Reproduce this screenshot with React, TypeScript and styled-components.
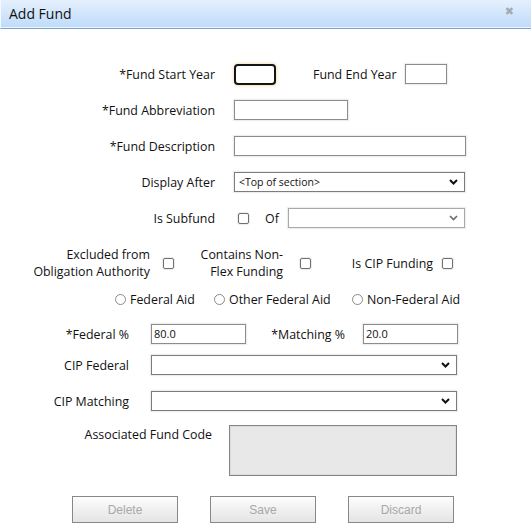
import React from "react";
import styled, { createGlobalStyle } from "styled-components";

const Global = createGlobalStyle`
  html, body { margin: 0; padding: 0; background: #fff; }
  body { font-family: "Open Sans", "Noto Sans", sans-serif; font-size: 12.4px; color: #111; }
  * { box-sizing: border-box; }
`;

const Dialog = styled.div`
  width: 531px;
  height: 530px;
  background: #fff;
  display: flex;
  flex-direction: column;
`;

const TitleBar = styled.div`
  height: 29px;
  flex: none;
  display: flex;
  align-items: center;
  justify-content: space-between;
  padding: 0 17px 2px 8px;
  background: linear-gradient(#e5f0fd, #bedbfa);
  border-left: 1px solid #f4f9ff;
  box-shadow: inset 0 -1px 0 #eef5fd;
  border-bottom: 1px solid #7ba3cb;
`;

const Title = styled.span`
  font-size: 14px;
  color: #111;
`;

const Close = styled.span`
  font-family: "DejaVu Sans", sans-serif;
  font-size: 11px;
  font-weight: bold;
  color: #a3aab3;
  margin-top: -3px;
`;

const Form = styled.div`
  display: flex;
  flex-direction: column;
  padding-top: 27px;
`;

const Row = styled.div<{ $h: number; $mt?: number; $pl?: number; $top?: boolean }>`
  display: flex;
  align-items: ${(p) => (p.$top ? "flex-start" : "center")};
  height: ${(p) => p.$h}px;
  margin-top: ${(p) => p.$mt ?? 0}px;
  padding-left: ${(p) => p.$pl ?? 0}px;
  flex: none;
`;

const Label = styled.div<{ $w: number; $ml?: number; $align?: string; $pt?: number }>`
  width: ${(p) => p.$w}px;
  margin-left: ${(p) => p.$ml ?? 0}px;
  padding-top: ${(p) => p.$pt ?? 0}px;
  text-align: ${(p) => p.$align ?? "right"};
  line-height: 17px;
  white-space: nowrap;
  flex: none;
`;

const TextInput = styled.input<{ $w: number; $ml?: number; $focus?: boolean }>`
  width: ${(p) => p.$w}px;
  height: ${(p) => (p.$focus ? 21 : 20)}px;
  margin-left: ${(p) => p.$ml ?? 0}px;
  padding: 0 2px 2px;
  font-family: "Open Sans", sans-serif;
  font-size: 11px;
  color: #111;
  border: ${(p) => (p.$focus ? "2px solid #141414" : "1px solid #8c8c8c")};
  border-radius: ${(p) => (p.$focus ? 4 : 0)}px;
  box-shadow: ${(p) =>
    p.$focus ? "0 0 3px 1px rgba(238, 205, 150, 0.6)" : "0 0 1px 1px #eeeeee"};
  background: #fff;
  outline: none;
  flex: none;
`;

const SelectBox = styled.div<{ $w: number; $ml?: number; $muted?: boolean }>`
  width: ${(p) => p.$w}px;
  height: 20px;
  margin-left: ${(p) => p.$ml ?? 0}px;
  padding: 0 6px 0 4px;
  display: flex;
  align-items: center;
  justify-content: space-between;
  border: 1px solid ${(p) => (p.$muted ? "#a9a9a9" : "#7c7c7c")};
  box-shadow: 0 0 1px 1px #eeeeee;
  font-size: 10.5px;
  color: #111;
  background: #fff;
  flex: none;
`;

const Check = styled.span<{ $ml?: number }>`
  width: 11px;
  height: 11px;
  margin-left: ${(p) => p.$ml ?? 0}px;
  border: 1px solid #6f6f6f;
  border-radius: 2px;
  background: #fff;
  box-shadow: 0 0 0 1px #ececec;
  flex: none;
`;

const RadioOption = styled.label<{ $w: number }>`
  width: ${(p) => p.$w}px;
  display: flex;
  align-items: center;
  gap: 4px;
  line-height: 17px;
  flex: none;
`;

const RadioDot = styled.span`
  width: 11px;
  height: 11px;
  border: 1px solid #8a8a8a;
  border-radius: 50%;
  background: #fff;
  flex: none;
`;

const TextArea = styled.div<{ $w: number; $ml: number }>`
  width: ${(p) => p.$w}px;
  height: 51px;
  margin-left: ${(p) => p.$ml}px;
  background: #e8e8e8;
  border: 1px solid #858585;
  box-shadow: inset 0 0 0 1px #dcdcdc;
  flex: none;
`;

const ButtonRow = styled.div`
  display: flex;
  gap: 32px;
  padding-left: 72px;
  margin-top: 20px;
`;

const Button = styled.button`
  width: 106px;
  height: 27px;
  border: 1px solid #888;
  background: linear-gradient(#fdfdfd, #e4e4e4);
  font-family: "Liberation Sans", Arial, sans-serif;
  font-size: 12px;
  color: #a8a8a8;
  padding: 0;
`;

const Chevron = ({ muted }: { muted?: boolean }) => (
  <svg width="9" height="6" viewBox="0 0 9 6">
    <path
      d="M1 1 L4.5 4.5 L8 1"
      fill="none"
      stroke={muted ? "#6b6b6b" : "#111"}
      strokeWidth={muted ? 1.6 : 2}
    />
  </svg>
);

export default function App() {
  return (
    <Dialog>
      <Global />
      <TitleBar>
        <Title>Add Fund</Title>
        <Close>✖</Close>
      </TitleBar>
      <Form>
        <Row $h={36}>
          <Label $w={215}>*Fund Start Year</Label>
          <TextInput $w={42} $ml={19} $focus readOnly />
          <Label $w={82} $ml={37} $align="left">Fund End Year</Label>
          <TextInput $w={42} $ml={10} readOnly />
        </Row>
        <Row $h={36}>
          <Label $w={215}>*Fund Abbreviation</Label>
          <TextInput $w={114} $ml={19} readOnly />
        </Row>
        <Row $h={36}>
          <Label $w={215}>*Fund Description</Label>
          <TextInput $w={232} $ml={19} readOnly />
        </Row>
        <Row $h={36}>
          <Label $w={215}>Display After</Label>
          <SelectBox $w={231} $ml={19}>
            <span>&lt;Top of section&gt;</span>
            <Chevron />
          </SelectBox>
        </Row>
        <Row $h={36}>
          <Label $w={215}>Is Subfund</Label>
          <Check $ml={23} />
          <Label $w={23} $ml={16} $align="left">Of</Label>
          <SelectBox $w={177} $muted>
            <span />
            <Chevron muted />
          </SelectBox>
        </Row>
        <Row $h={36} $mt={9}>
          <Label $w={150}>
            Excluded from
            <br />
            Obligation Authority
          </Label>
          <Check $ml={13} />
          <Label $w={109}>
            Contains Non-
            <br />
            Flex Funding
          </Label>
          <Check $ml={17} />
          <Label $w={122}>Is CIP Funding</Label>
          <Check $ml={9} />
        </Row>
        <Row $h={36} $pl={115}>
          <RadioOption $w={99}>
            <RadioDot />
            Federal Aid
          </RadioOption>
          <RadioOption $w={138}>
            <RadioDot />
            Other Federal Aid
          </RadioOption>
          <RadioOption $w={120}>
            <RadioDot />
            Non-Federal Aid
          </RadioOption>
        </Row>
        <Row $h={34}>
          <Label $w={129}>*Federal %</Label>
          <TextInput $w={95} $ml={22} defaultValue="80.0" readOnly />
          <Label $w={99}>*Matching %</Label>
          <TextInput $w={95} $ml={18} defaultValue="20.0" readOnly />
        </Row>
        <Row $h={28}>
          <Label $w={129}>CIP Federal</Label>
          <SelectBox $w={306} $ml={22}>
            <span />
            <Chevron />
          </SelectBox>
        </Row>
        <Row $h={44}>
          <Label $w={129}>CIP Matching</Label>
          <SelectBox $w={306} $ml={22}>
            <span />
            <Chevron />
          </SelectBox>
        </Row>
        <Row $h={51} $mt={2} $top>
          <Label $w={212} $pt={1}>Associated Fund Code</Label>
          <TextArea $w={228} $ml={17} />
        </Row>
        <ButtonRow>
          <Button>Delete</Button>
          <Button>Save</Button>
          <Button>Discard</Button>
        </ButtonRow>
      </Form>
    </Dialog>
  );
}
